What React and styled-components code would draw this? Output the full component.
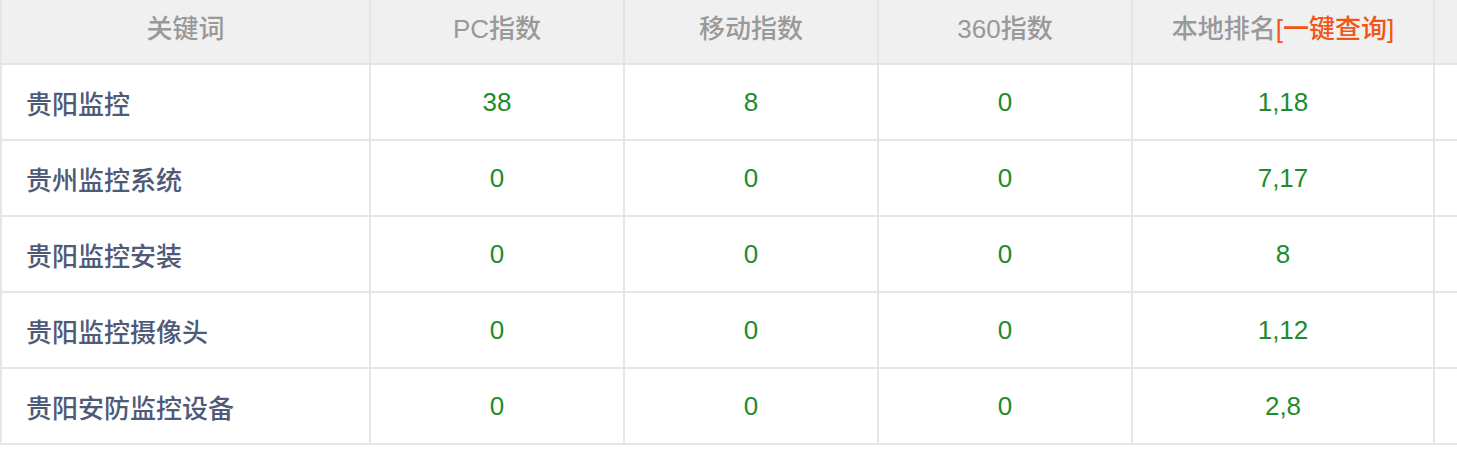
import styled, { createGlobalStyle } from "styled-components";

const GlobalStyle = createGlobalStyle`
  html, body {
    margin: 0;
    padding: 0;
    background: #ffffff;
    overflow: hidden;
  }
  body {
    font-family: "Liberation Sans", "Noto Sans CJK SC", sans-serif;
  }
`;

const Table = styled.table`
  border-collapse: separate;
  border-spacing: 0;
  table-layout: fixed;
  width: 1500px;
  border-left: 2px solid #e6e6e6;
  font-size: 26px;
`;

const HeadCell = styled.th`
  height: 53px;
  padding: 0 0 10px;
  background: #f0f0f0;
  color: #999999;
  font-weight: 500;
  text-align: center;
  border-right: 2px solid #e4e4e4;
  border-bottom: 2px solid #e4e4e4;
`;

const QueryLink = styled.a`
  color: #f0551a;
  text-decoration: none;
  cursor: pointer;
`;

const Cell = styled.td`
  height: 74px;
  padding: 0 ${(p) => (p.$keyword ? "24px" : "0")};
  text-align: ${(p) => (p.$keyword ? "left" : "center")};
  color: ${(p) => (p.$keyword ? "#4e5a78" : "#1e8c2e")};
  font-weight: 500;
  border-right: 2px solid #e6e6e6;
  border-bottom: 2px solid #e6e6e6;
  white-space: nowrap;
`;

const columns = [369, 254, 254, 254, 302, 67];

const rows = [
  { keyword: "贵阳监控", pc: 38, mobile: 8, so: 0, rank: "1,18" },
  { keyword: "贵州监控系统", pc: 0, mobile: 0, so: 0, rank: "7,17" },
  { keyword: "贵阳监控安装", pc: 0, mobile: 0, so: 0, rank: "8" },
  { keyword: "贵阳监控摄像头", pc: 0, mobile: 0, so: 0, rank: "1,12" },
  { keyword: "贵阳安防监控设备", pc: 0, mobile: 0, so: 0, rank: "2,8" },
];

export default function App() {
  return (
    <>
      <GlobalStyle />
      <Table>
        <colgroup>
          {columns.map((w, i) => (
            <col key={i} style={{ width: w }} />
          ))}
        </colgroup>
        <thead>
          <tr>
            <HeadCell>关键词</HeadCell>
            <HeadCell>PC指数</HeadCell>
            <HeadCell>移动指数</HeadCell>
            <HeadCell>360指数</HeadCell>
            <HeadCell>
              本地排名<QueryLink>[一键查询]</QueryLink>
            </HeadCell>
            <HeadCell />
          </tr>
        </thead>
        <tbody>
          {rows.map((r) => (
            <tr key={r.keyword}>
              <Cell $keyword>{r.keyword}</Cell>
              <Cell>{r.pc}</Cell>
              <Cell>{r.mobile}</Cell>
              <Cell>{r.so}</Cell>
              <Cell>{r.rank}</Cell>
              <Cell />
            </tr>
          ))}
        </tbody>
      </Table>
    </>
  );
}
